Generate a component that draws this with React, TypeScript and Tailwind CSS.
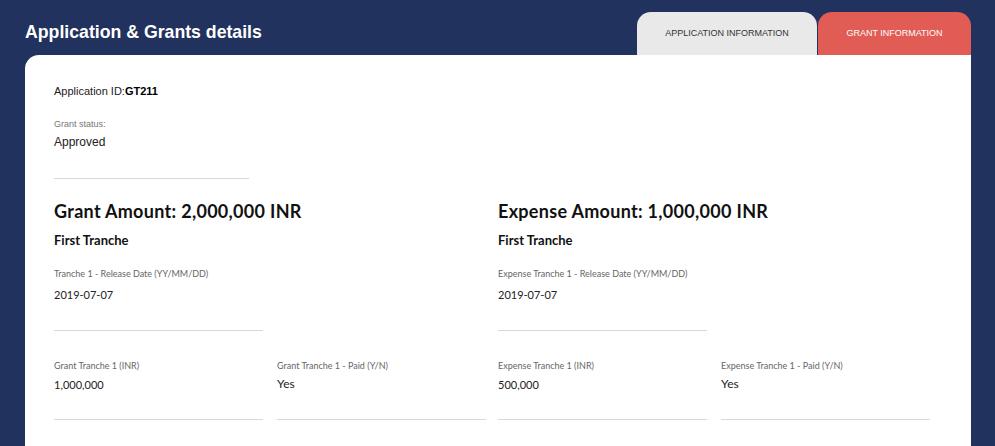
const raleway = "font-['Lato','Open_Sans',sans-serif]";

type FieldProps = { label: string; value: string; big?: boolean; first?: boolean };

const Field = ({ label, value, big, first }: FieldProps) => {
  return (
    <div className={`border-b border-[#d8d8d8] ${first ? "mt-[19px] pb-[28px]" : "mt-[29px] pb-[27px]"}`}>
      <div className={`${raleway} text-[9px] leading-[12px] text-[#666]`}>{label}</div>
      <div
        className={`${raleway} text-[#222] ${big ? "text-[12px] leading-[16px] mt-[4px]" : "text-[11px] leading-[14px] mt-[6px]"} ${first ? "mt-[8px]" : ""}`}
      >
        {value}
      </div>
    </div>
  );
};

type SectionProps = {
  title: string;
  prefix: string;
  date: string;
  amount: string;
  paid: string;
};

const Section = ({ title, prefix, date, amount, paid }: SectionProps) => {
  const short = prefix === "Grant" ? "Tranche" : "Expense Tranche";
  return (
    <div className="w-[432px]">
      <h2 className={`${raleway} text-[18px] leading-[24px] font-bold tracking-[0.3px] text-[#111]`}>{title}</h2>
      <h3 className={`${raleway} text-[13px] leading-[18px] font-bold text-[#111] mt-[8px]`}>First Tranche</h3>
      <div className="grid grid-cols-2 gap-x-[14px]">
        <Field first label={`${short} 1 - Release Date (YY/MM/DD)`} value={date} />
        <div />
        <Field label={`${prefix} Tranche 1 (INR)`} value={amount} />
        <Field big label={`${prefix} Tranche 1 - Paid (Y/N)`} value={paid} />
      </div>
    </div>
  );
};

const App = () => {
  return (
    <div className="w-full h-[446px] overflow-hidden bg-[#21325e] pl-[25px] pr-[24px] font-['Liberation_Sans',Arial,sans-serif]">
      <div className="flex justify-between items-end h-[55px]">
        <h1 className="self-start pt-[21px] text-white text-[17.7px] leading-[22px] font-bold">
          Application &amp; Grants details
        </h1>
        <div className="flex gap-[1px] h-[43px]">
          <div className="w-[180px] bg-[#e9e9e9] rounded-t-[14px] flex items-center justify-center text-[9px] text-[#333] uppercase">
            Application Information
          </div>
          <div className="w-[153px] bg-[#e05c55] rounded-t-[14px] flex items-center justify-center text-[9px] text-white uppercase">
            Grant Information
          </div>
        </div>
      </div>

      <div className="bg-white rounded-tl-[14px] h-[400px] pl-[29px] pt-[29px]">
        <div className="text-[11px] leading-[14px] text-[#222]">
          Application ID:<span className="font-bold text-black">GT211</span>
        </div>
        <div className="w-[195px] border-b border-[#d8d8d8] pb-[28px]">
          <div className="mt-[20px] text-[9px] leading-[12px] text-[#777]">Grant status:</div>
          <div className="mt-[4px] text-[12px] leading-[16px] text-[#222]">Approved</div>
        </div>

        <div className="flex gap-[12px] mt-[20px]">
          <Section
            title="Grant Amount: 2,000,000 INR"
            prefix="Grant"
            date="2019-07-07"
            amount="1,000,000"
            paid="Yes"
          />
          <Section
            title="Expense Amount: 1,000,000 INR"
            prefix="Expense"
            date="2019-07-07"
            amount="500,000"
            paid="Yes"
          />
        </div>
      </div>
    </div>
  );
};

export default App;
